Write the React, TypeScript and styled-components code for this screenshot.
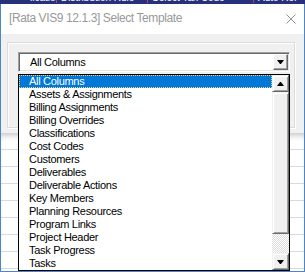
import React from "react";
import styled, { createGlobalStyle } from "styled-components";

const templates = [
  "All Columns",
  "Assets & Assignments",
  "Billing Assignments",
  "Billing Overrides",
  "Classifications",
  "Cost Codes",
  "Customers",
  "Deliverables",
  "Deliverable Actions",
  "Key Members",
  "Planning Resources",
  "Program Links",
  "Project Header",
  "Task Progress",
  "Tasks",
];

const ribbonTabs = [
  { label: "lication", width: 31 },
  { label: "Distribution Rule", width: 91 },
  { label: "Select Tax Code", width: 106 },
  { label: "Auto Rel", width: 60 },
];

const App = () => {
  return (
    <>
      <GlobalStyle />
      <StyledScreen>
        <StyledRibbon>
          {ribbonTabs.map((t) => (
            <StyledRibbonLabel key={t.label} $w={t.width}>
              {t.label}
            </StyledRibbonLabel>
          ))}
        </StyledRibbon>
        <StyledWindow>
          <StyledTitleBar>
            <StyledTitle>[Rata VIS9 12.1.3] Select Template</StyledTitle>
            <StyledClose aria-label="Close">
              <svg width="10" height="10" viewBox="0 0 10 10">
                <path d="M0.5 0.5L9.5 9.5M9.5 0.5L0.5 9.5" stroke="#8f8f8f" strokeWidth="1" />
              </svg>
            </StyledClose>
          </StyledTitleBar>
          <StyledBody>
            <StyledGroup>
              <StyledCombo>
                <StyledComboText>All Columns</StyledComboText>
                <StyledComboButton>
                  <StyledArrow $dir="down" />
                </StyledComboButton>
              </StyledCombo>
            </StyledGroup>
          </StyledBody>
          <StyledSheet />
        </StyledWindow>

        <StyledList>
          <StyledItems>
            {templates.map((t, i) => (
              <StyledItem key={t} $selected={i === 0}>
                {t}
              </StyledItem>
            ))}
          </StyledItems>
          <StyledScrollbar>
            <StyledScrollButton>
              <StyledArrow $dir="up" />
            </StyledScrollButton>
            <StyledThumb />
            <StyledTrack />
            <StyledScrollButton>
              <StyledArrow $dir="down" />
            </StyledScrollButton>
          </StyledScrollbar>
        </StyledList>
      </StyledScreen>
    </>
  );
};

const GlobalStyle = createGlobalStyle`
  html, body {
    margin: 0;
    padding: 0;
    background: #fff;
  }
  body {
    font-family: "Liberation Sans", Arial, sans-serif;
  }
  * {
    box-sizing: border-box;
  }
`;

const StyledScreen = styled.div`
  position: relative;
  width: 305px;
  height: 272px;
  overflow: hidden;
  display: flex;
  flex-direction: column;
  background: #fff;
`;

const StyledRibbon = styled.div`
  flex: none;
  height: 4px;
  overflow: hidden;
  display: flex;
  padding-left: 26px;
  background: #27307b;
  color: #fff;
  font-size: 10px;
  line-height: 10px;
  white-space: nowrap;
`;

const StyledRibbonLabel = styled.span<{ $w: number }>`
  flex: none;
  width: ${({ $w }) => $w}px;
  height: 10px;
  overflow: hidden;
  margin-top: -7px;
  padding-left: 4px;
  border-right: 1px solid #b2475a;
`;

const StyledWindow = styled.div`
  flex: 1;
  display: flex;
  flex-direction: column;
  border: 1px solid #4a86c8;
  border-top: none;
`;

const StyledTitleBar = styled.div`
  flex: none;
  height: 30px;
  display: flex;
  align-items: center;
  justify-content: space-between;
  padding: 0 8px 2px 8px;
  background: #fff;
`;

const StyledTitle = styled.span`
  font-size: 12px;
  letter-spacing: -0.4px;
  color: #999;
`;

const StyledClose = styled.span`
  display: flex;
  width: 10px;
  height: 10px;
  margin-top: 2px;
`;

const StyledBody = styled.div`
  flex: none;
  height: 99px;
  padding: 8px 9px 0 6px;
  background: #f0f0f0;
`;

const StyledGroup = styled.div`
  height: 86px;
  padding: 9px 0 0 10px;
  border: 1px solid #dcdcdc;
  box-shadow: inset 1px 1px #fff, 1px 1px #fff;
`;

const StyledCombo = styled.div`
  width: 272px;
  height: 20px;
  display: flex;
  align-items: stretch;
  background: #fff;
  border: 1px solid;
  border-color: #a0a0a0 #fff #fff #a0a0a0;
  box-shadow: inset 1px 1px #696969, inset -1px -1px #e3e3e3;
  padding: 1px;
`;

const StyledComboText = styled.span`
  flex: 1;
  padding-left: 10px;
  font-size: 11px;
  letter-spacing: -0.3px;
  line-height: 16px;
  color: #000;
`;

const StyledComboButton = styled.span`
  width: 15px;
  display: flex;
  align-items: center;
  justify-content: center;
  background: #f0f0f0;
  border: 1px solid;
  border-color: #fff #696969 #696969 #fff;
  box-shadow: inset -1px -1px #a0a0a0;
`;

const StyledArrow = styled.span<{ $dir: "up" | "down" }>`
  width: 1px;
  height: 0;
  border-left: 3px solid transparent;
  border-right: 3px solid transparent;
  ${({ $dir }) =>
    $dir === "down"
      ? "border-top: 4px solid #000;"
      : "border-bottom: 4px solid #000;"}
  box-sizing: content-box;
`;

const StyledSheet = styled.div`
  flex: 1;
  background-color: #fff;
  background-image: linear-gradient(#dadada 1px, transparent 1px),
    linear-gradient(90deg, #dadada 1px, transparent 1px);
  background-size: 100% 17px, 98px 100%;
  background-position: 0 16px, 56px 0;
  box-shadow: inset 0 6px 6px -4px rgba(0, 0, 0, 0.25);
`;

const StyledList = styled.div`
  position: absolute;
  left: 18px;
  top: 74px;
  width: 272px;
  height: 197px;
  display: flex;
  background: #fff;
  border: 1px solid #000;
`;

const StyledItems = styled.div`
  flex: 1;
  display: flex;
  flex-direction: column;
`;

const StyledItem = styled.div<{ $selected?: boolean }>`
  height: 13px;
  padding-left: 10px;
  font-size: 11px;
  letter-spacing: -0.3px;
  line-height: 13px;
  white-space: nowrap;
  color: ${({ $selected }) => ($selected ? "#fff" : "#000")};
  background: ${({ $selected }) => ($selected ? "#0078d7" : "transparent")};
  outline: ${({ $selected }) => ($selected ? "1px dotted #f3d37a" : "none")};
  outline-offset: -1px;
`;

const StyledScrollbar = styled.div`
  width: 17px;
  flex: none;
  display: flex;
  flex-direction: column;
`;

const StyledScrollButton = styled.div`
  height: 17px;
  flex: none;
  display: flex;
  align-items: center;
  justify-content: center;
  background: #f0f0f0;
  border: 1px solid;
  border-color: #f0f0f0 #696969 #696969 #f0f0f0;
  box-shadow: inset 1px 1px #fff, inset -1px -1px #a0a0a0;
`;

const StyledThumb = styled.div`
  height: 142px;
  flex: none;
  background: #f0f0f0;
  border: 1px solid;
  border-color: #f0f0f0 #696969 #696969 #f0f0f0;
  box-shadow: inset 1px 1px #fff, inset -1px -1px #a0a0a0;
`;

const StyledTrack = styled.div`
  flex: 1;
  background: repeating-conic-gradient(#dcdcdc 0 25%, #fff 0 50%) 0 0 / 2px 2px;
`;

export default App;
